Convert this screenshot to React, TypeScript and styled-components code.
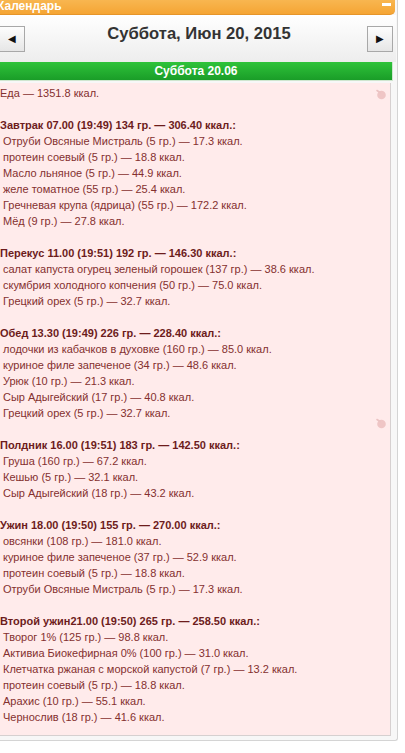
import React from 'react';
import styled, { createGlobalStyle } from 'styled-components';

const GlobalStyle = createGlobalStyle`
  html, body {
    margin: 0;
    padding: 0;
    background: #ffffff;
    width: 405px;
    overflow: hidden;
  }
`;

interface Meal {
  title: string;
  items: string[];
}

const meals: Meal[] = [
  {
    title: 'Завтрак 07.00 (19:49) 134 гр. — 306.40 ккал.:',
    items: [
      'Отруби Овсяные Мистраль (5 гр.) — 17.3 ккал.',
      'протеин соевый (5 гр.) — 18.8 ккал.',
      'Масло льняное (5 гр.) — 44.9 ккал.',
      'желе томатное (55 гр.) — 25.4 ккал.',
      'Гречневая крупа (ядрица) (55 гр.) — 172.2 ккал.',
      'Мёд (9 гр.) — 27.8 ккал.',
    ],
  },
  {
    title: 'Перекус 11.00 (19:51) 192 гр. — 146.30 ккал.:',
    items: [
      'салат капуста огурец зеленый горошек (137 гр.) — 38.6 ккал.',
      'скумбрия холодного копчения (50 гр.) — 75.0 ккал.',
      'Грецкий орех (5 гр.) — 32.7 ккал.',
    ],
  },
  {
    title: 'Обед 13.30 (19:49) 226 гр. — 228.40 ккал.:',
    items: [
      'лодочки из кабачков в духовке (160 гр.) — 85.0 ккал.',
      'куриное филе запеченое (34 гр.) — 48.6 ккал.',
      'Урюк (10 гр.) — 21.3 ккал.',
      'Сыр Адыгейский (17 гр.) — 40.8 ккал.',
      'Грецкий орех (5 гр.) — 32.7 ккал.',
    ],
  },
  {
    title: 'Полдник 16.00 (19:51) 183 гр. — 142.50 ккал.:',
    items: [
      'Груша (160 гр.) — 67.2 ккал.',
      'Кешью (5 гр.) — 32.1 ккал.',
      'Сыр Адыгейский (18 гр.) — 43.2 ккал.',
    ],
  },
  {
    title: 'Ужин 18.00 (19:50) 155 гр. — 270.00 ккал.:',
    items: [
      'овсянки (108 гр.) — 181.0 ккал.',
      'куриное филе запеченое (37 гр.) — 52.9 ккал.',
      'протеин соевый (5 гр.) — 18.8 ккал.',
      'Отруби Овсяные Мистраль (5 гр.) — 17.3 ккал.',
    ],
  },
  {
    title: 'Второй ужин21.00 (19:50) 265 гр. — 258.50 ккал.:',
    items: [
      'Творог 1% (125 гр.) — 98.8 ккал.',
      'Активиа Биокефирная 0% (100 гр.) — 31.0 ккал.',
      'Клетчатка ржаная с морской капустой (7 гр.) — 13.2 ккал.',
      'протеин соевый (5 гр.) — 18.8 ккал.',
      'Арахис (10 гр.) — 55.1 ккал.',
      'Чернослив (18 гр.) — 41.6 ккал.',
    ],
  },
];

const Widget = styled.div`
  width: 397px;
  border-right: 1px solid #d4d4d4;
  border-bottom: 1px solid #d4d4d4;
  border-bottom-right-radius: 3px;
  background: #f7f7f7;
  padding-bottom: 4px;
  font-family: "Liberation Sans", Arial, sans-serif;
`;

const Header = styled.div`
  width: 395px;
  height: 15px;
  background: linear-gradient(#f8b650, #f5a534);
  border-bottom: 1px solid #e6952a;
  border-bottom-right-radius: 5px;
  display: flex;
  align-items: center;
  justify-content: space-between;
  box-sizing: border-box;
`;

const HeaderTitle = styled.span`
  color: #ffffff;
  font-weight: bold;
  font-size: 12px;
  margin-left: -3px;
  line-height: 12px;
  margin-top: -3px;
`;

const Collapse = styled.span`
  width: 9px;
  height: 3px;
  background: #ffffff;
  margin-right: 4px;
  margin-top: -6px;
`;

const Nav = styled.div`
  height: 47px;
  width: 396px;
  display: flex;
  align-items: center;
  justify-content: space-between;
  padding-top: 0;
  box-sizing: border-box;
  background: linear-gradient(#ffffff, #ededed);
`;

const NavButton = styled.div<{ $side: 'left' | 'right' }>`
  width: 24px;
  height: 24px;
  border: 1px solid #a8a8a8;
  border-left-width: ${(p) => (p.$side === 'left' ? '0' : '1px')};
  margin-right: ${(p) => (p.$side === 'right' ? '3px' : '0')};
  background: linear-gradient(#fdfdfd, #e6e6e6);
  display: flex;
  align-items: center;
  justify-content: center;
  color: #111;
  font-size: 10px;
`;

const Title = styled.div`
  font-size: 16.6px;
  font-weight: bold;
  color: #333333;
  margin-left: 6px;
  margin-top: -9px;
`;

const DayBar = styled.div`
  width: 393px;
  height: 19px;
  border-right: 1px solid #cfe6cf;
  border-bottom: 1px solid #cfe6cf;
  background: linear-gradient(#2fc33a, #1a9d28);
  color: #ffffff;
  font-weight: bold;
  font-size: 12px;
  line-height: 18px;
  text-align: center;
  box-sizing: border-box;
`;

const Content = styled.div`
  position: relative;
  margin-top: 2px;
  width: 391px;
  background: #ffebeb;
  border-right: 1px solid #d6d0d0;
  border-bottom: 1px solid #d6d0d0;
  padding: 2px 0 10px 0;
  box-sizing: border-box;
  font-size: 11px;
  line-height: 16px;
  color: #84302f;
`;

const Line = styled.div<{ $bold?: boolean; $indent?: boolean }>`
  font-weight: ${(p) => (p.$bold ? 'bold' : 'normal')};
  color: ${(p) => (p.$bold ? '#6d1c1c' : '#84302f')};
  padding-left: ${(p) => (p.$indent ? '3px' : '0')};
  white-space: nowrap;
  height: 16px;
`;

const Blob = styled.svg<{ $top: number }>`
  position: absolute;
  right: 3px;
  top: ${(p) => p.$top}px;
`;

const Fruit = ({ top }: { top: number }) => (
  <Blob $top={top} width="12" height="12" viewBox="0 0 12 12">
    <circle cx="6.5" cy="7" r="4.3" fill="#efc5c5" />
    <path d="M2 2.5 L5 4.5" stroke="#ebc3c3" strokeWidth="1.6" strokeLinecap="round" />
  </Blob>
);

export default function App() {
  return (
    <>
      <GlobalStyle />
      <Widget>
        <Header>
          <HeaderTitle>Календарь</HeaderTitle>
          <Collapse />
        </Header>
        <Nav>
          <NavButton $side="left">◀</NavButton>
          <Title>Суббота, Июн 20, 2015</Title>
          <NavButton $side="right">▶</NavButton>
        </Nav>
        <DayBar>Суббота 20.06</DayBar>
        <Content>
          <Fruit top={5} />
          <Fruit top={334} />
          <Line>Еда — 1351.8 ккал.</Line>
          {meals.map((meal, i) => (
            <React.Fragment key={i}>
              <Line />
              <Line $bold>{meal.title}</Line>
              {meal.items.map((item, j) => (
                <Line key={j} $indent>
                  {item}
                </Line>
              ))}
            </React.Fragment>
          ))}
        </Content>
      </Widget>
    </>
  );
}
